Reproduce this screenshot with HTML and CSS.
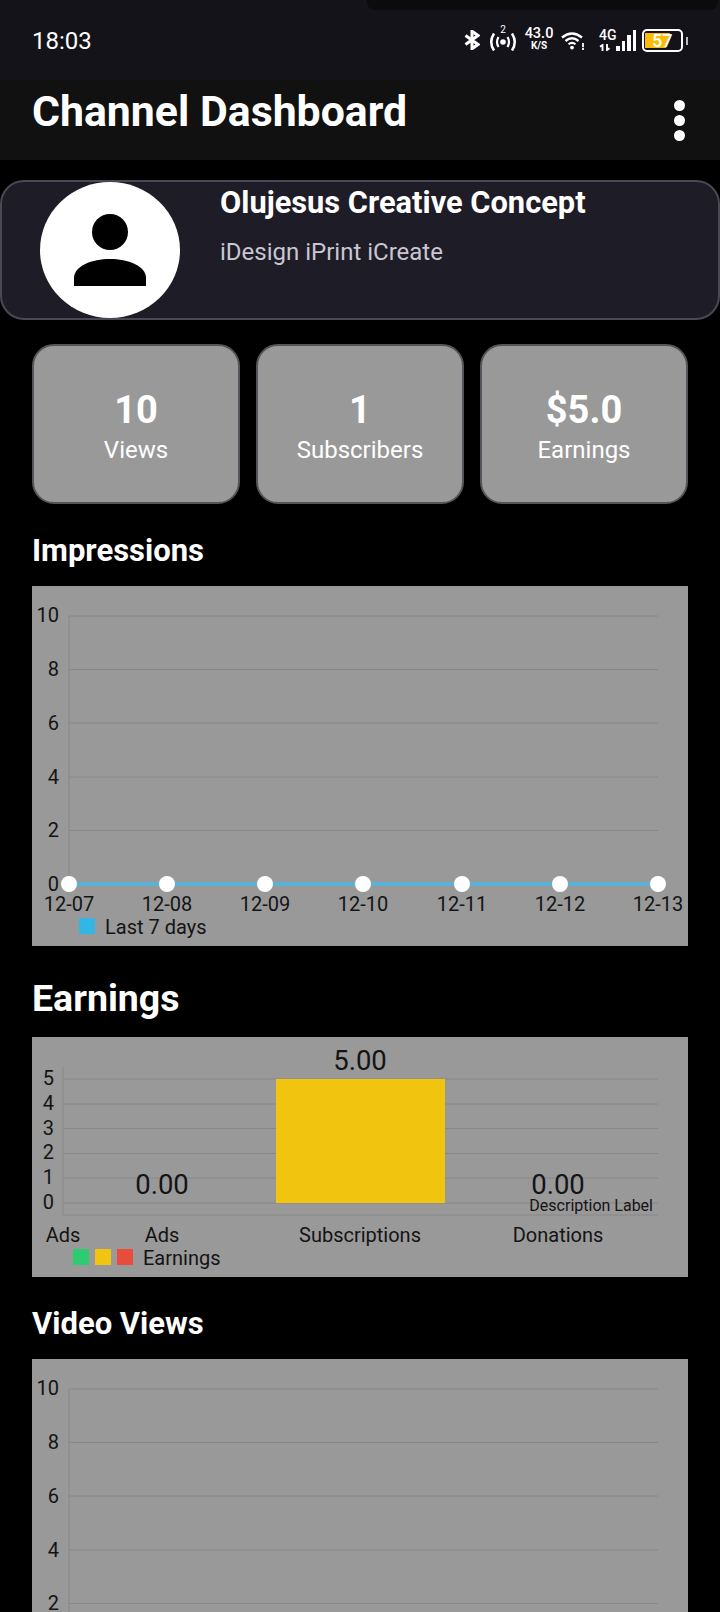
FILE: index.html
```html
<!DOCTYPE html>
<html lang="en">
<head>
    <meta charset="UTF-8">
    <meta name="viewport" content="width=device-width, initial-scale=1.0">
    <title>Channel Dashboard</title>
    <link rel="stylesheet" href="styles.css">
</head>
<body>
    <div class="notch"></div>
    <div class="status-bar">
        <span class="clock">18:03</span>
        <div class="status-icons">
            <svg class="icon-bt" width="16" height="20" viewBox="0 0 16 20">
                <path d="M1.500 5.500 L14 14.500 L8 18.800 V1.200 L14 5.500 L1.500 14.500" fill="none" stroke="#fff" stroke-width="3"/>
            </svg>
            <div class="hotspot">
                <span class="hotspot-num">2</span>
                <svg width="28" height="18" viewBox="0 0 28 18">
                    <circle cx="14" cy="9" r="2.800" fill="#fff"/>
                    <path d="M9.500 4 Q6.500 9 9.500 14 M18.500 4 Q21.500 9 18.500 14" fill="none" stroke="#fff" stroke-width="2.200"/>
                    <path d="M5 0.500 Q-0.500 9 5 17.500 M23 0.500 Q28.500 9 23 17.500" fill="none" stroke="#fff" stroke-width="2.500"/>
                </svg>
            </div>
            <div class="speed"><span class="speed-num">43.0</span><span class="speed-unit">K/S</span></div>
            <svg class="icon-wifi" width="24" height="18" viewBox="0 0 24 18">
                <path d="M1 5.500 Q11 -2.500 21 5.500" fill="none" stroke="#fff" stroke-width="2.300"/>
                <path d="M4.500 9 Q11 3.500 17.500 9" fill="none" stroke="#fff" stroke-width="2.300"/>
                <path d="M7.500 12.300 Q11 9.500 14.500 12.300" fill="none" stroke="#fff" stroke-width="2.100"/>
                <circle cx="11" cy="15.600" r="1.900" fill="#fff"/>
                <path d="M22 11 V15.200 M22 16 V18" stroke="#fff" stroke-width="1.800"/>
            </svg>
            <div class="network">
                <span class="net-type">4G</span>
                <svg width="12" height="7" viewBox="0 0 12 7">
                    <path d="M3.500 7 V1 L1 2.800 M8 0 V6 L10.500 4.200" fill="none" stroke="#fff" stroke-width="1.900"/>
                </svg>
            </div>
            <div class="signal">
                <i class="bar-1"></i><i class="bar-2"></i><i class="bar-3"></i><i class="bar-4"></i>
            </div>
            <div class="battery">
                <div class="battery-body"><div class="battery-fill"></div><span class="battery-num">57</span></div>
                <div class="battery-cap"></div>
            </div>
        </div>
    </div>

    <header class="app-bar">
        <h1>Channel Dashboard</h1>
        <div class="menu-dots"><i></i><i></i><i></i></div>
    </header>

    <section class="channel-card">
        <div class="avatar">
            <svg width="72" height="72" viewBox="0 0 72 72">
                <circle cx="36" cy="18" r="18" fill="#000"/>
                <path d="M0 72 V64 C0 52 18 45 36 45 C54 45 72 52 72 64 V72 Z" fill="#000"/>
            </svg>
        </div>
        <div class="channel-info">
            <h2>Olujesus Creative Concept</h2>
            <p>iDesign iPrint iCreate</p>
        </div>
    </section>

    <div class="stats">
        <div class="stat"><strong>10</strong><span>Views</span></div>
        <div class="stat"><strong>1</strong><span>Subscribers</span></div>
        <div class="stat"><strong>$5.0</strong><span>Earnings</span></div>
    </div>

    <h3 class="section-title">Impressions</h3>
    <div class="chart">
        <svg width="656" height="360" viewBox="0 0 656 360">
            <g class="grid">
                <path d="M37 30 H626 M37 83.500 H626 M37 137 H626 M37 191 H626 M37 244.500 H626 M37 298 H626 M37 30 V298"/>
            </g>
            <g class="y-labels">
                <text x="27" y="36">10</text>
                <text x="27" y="90">8</text>
                <text x="27" y="144">6</text>
                <text x="27" y="198">4</text>
                <text x="27" y="251">2</text>
                <text x="27" y="305">0</text>
            </g>
            <path class="series" d="M37 298 H626"/>
            <g class="dots">
                <circle cx="37" cy="298" r="8"/>
                <circle cx="135" cy="298" r="8"/>
                <circle cx="233" cy="298" r="8"/>
                <circle cx="331" cy="298" r="8"/>
                <circle cx="430" cy="298" r="8"/>
                <circle cx="528" cy="298" r="8"/>
                <circle cx="626" cy="298" r="8"/>
            </g>
            <g class="x-labels">
                <text x="37" y="325">12-07</text>
                <text x="135" y="325">12-08</text>
                <text x="233" y="325">12-09</text>
                <text x="331" y="325">12-10</text>
                <text x="430" y="325">12-11</text>
                <text x="528" y="325">12-12</text>
                <text x="626" y="325">12-13</text>
            </g>
            <rect x="47" y="332" width="16" height="16" fill="#33b5e5"/>
            <text class="legend" x="73" y="348">Last 7 days</text>
        </svg>
    </div>

    <h3 class="section-title title-large">Earnings</h3>
    <div class="chart">
        <svg width="656" height="240" viewBox="0 0 656 240">
            <g class="grid">
                <path d="M31 42 H626 M31 67 H626 M31 91.500 H626 M31 116.500 H626 M31 141 H626 M31 166 H626 M31 178 H626 M31 30 V178"/>
            </g>
            <g class="y-labels">
                <text x="22" y="48">5</text>
                <text x="22" y="73">4</text>
                <text x="22" y="98">3</text>
                <text x="22" y="122">2</text>
                <text x="22" y="147">1</text>
                <text x="22" y="172">0</text>
            </g>
            <rect x="244" y="42" width="169" height="124" fill="#f1c40f"/>
            <g class="bar-values">
                <text x="130" y="157">0.00</text>
                <text x="328" y="33">5.00</text>
                <text x="526" y="157">0.00</text>
            </g>
            <text class="description" x="621" y="174">Description Label</text>
            <g class="x-labels">
                <text x="31" y="205">Ads</text>
                <text x="130" y="205">Ads</text>
                <text x="328" y="205">Subscriptions</text>
                <text x="526" y="205">Donations</text>
            </g>
            <rect x="41" y="212" width="16" height="16" fill="#2ecc71"/>
            <rect x="63" y="212" width="16" height="16" fill="#f1c40f"/>
            <rect x="85" y="212" width="16" height="16" fill="#e74c3c"/>
            <text class="legend" x="111" y="228">Earnings</text>
        </svg>
    </div>

    <h3 class="section-title title-last">Video Views</h3>
    <div class="chart">
        <svg width="656" height="253" viewBox="0 0 656 253">
            <g class="grid">
                <path d="M37 30 H626 M37 83.500 H626 M37 137 H626 M37 191 H626 M37 244.500 H626 M37 30 V253"/>
            </g>
            <g class="y-labels">
                <text x="27" y="36">10</text>
                <text x="27" y="90">8</text>
                <text x="27" y="144">6</text>
                <text x="27" y="198">4</text>
                <text x="27" y="251">2</text>
            </g>
        </svg>
    </div>
</body>
</html>
```

FILE: styles.css
```css
body {
    margin: 0;
    background-color: #000;
    color: #fff;
    font-family: Roboto, "Noto Sans", sans-serif;
    position: relative;
}
.notch {
    position: absolute;
    top: 0;
    left: 367px;
    right: 2px;
    height: 10px;
    background-color: #0b0b0e;
    border-radius: 0 0 8px 8px;
}

/* status bar */
.status-bar {
    height: 80px;
    box-sizing: border-box;
    padding: 0 32px;
    background-color: #14131a;
    display: flex;
    justify-content: space-between;
    align-items: center;
}
.clock {
    font-size: 24px;
    font-weight: 400;
    padding-top: 2px;
}
.status-icons {
    height: 24px;
    display: flex;
    align-items: flex-end;
}
.icon-bt {
    margin-bottom: 2px;
}
.hotspot {
    margin-left: 9px;
    margin-bottom: 1px;
    display: flex;
    flex-direction: column;
    align-items: center;
}
.hotspot-num {
    font-size: 10px;
    line-height: 8px;
    margin-bottom: -1px;
}
.speed {
    margin-left: 8px;
    margin-bottom: 2px;
    width: 28px;
    display: flex;
    flex-direction: column;
    align-items: center;
}
.speed-num {
    font-size: 14.500px;
    font-weight: 500;
    line-height: 14px;
}
.speed-unit {
    font-size: 10px;
    font-weight: 700;
    line-height: 9px;
}
.icon-wifi {
    margin-left: 8px;
    margin-bottom: 2px;
}
.network {
    margin-left: 14px;
    margin-bottom: 1px;
    width: 16px;
    display: flex;
    flex-direction: column;
    align-items: flex-start;
}
.net-type {
    font-size: 14px;
    font-weight: 500;
    line-height: 14px;
    margin-bottom: 2px;
}
.signal {
    margin-left: 1px;
    margin-bottom: 1px;
    display: flex;
    align-items: flex-end;
    gap: 2px;
}
.signal i {
    width: 3.500px;
    background-color: #fff;
}
.bar-1 { height: 5px; }
.bar-2 { height: 10px; }
.bar-3 { height: 16px; }
.bar-4 { height: 21px; }
.battery {
    margin-left: 6px;
    display: flex;
    align-items: center;
    gap: 3px;
}
.battery-body {
    position: relative;
    width: 41px;
    height: 23px;
    box-sizing: border-box;
    border: 2px solid #fff;
    border-radius: 5px;
}
.battery-fill {
    position: absolute;
    top: 2px;
    bottom: 2px;
    left: 1px;
    width: 25px;
    background-color: #fbbc05;
    clip-path: polygon(0 0, 100% 0, 84% 100%, 0 100%);
}
.battery-num {
    position: absolute;
    top: 0;
    left: 8px;
    line-height: 19px;
    font-size: 18px;
    font-weight: 500;
}
.battery-cap {
    width: 2px;
    height: 8px;
    background-color: #bbb;
}

/* app bar */
.app-bar {
    height: 80px;
    box-sizing: border-box;
    padding: 0 32px;
    background-color: #111;
    display: flex;
    justify-content: space-between;
    align-items: center;
}
.app-bar h1 {
    margin: 0 0 18px;
    font-size: 42.800px;
    line-height: 50px;
    font-weight: 700;
}
.menu-dots {
    display: flex;
    flex-direction: column;
    gap: 4px;
    padding-right: 3px;
}
.menu-dots i {
    width: 11px;
    height: 11px;
    border-radius: 50%;
    background-color: #fff;
}

/* channel card */
.channel-card {
    margin-top: 20px;
    height: 140px;
    box-sizing: border-box;
    border: 2px solid #4a4953;
    border-radius: 24px;
    background-color: #1e1c26;
    padding: 0 0 0 38px;
    display: flex;
    gap: 40px;
}
.avatar {
    width: 140px;
    height: 136px;
    border-radius: 50%;
    background-color: #fff;
    display: flex;
    align-items: center;
    justify-content: center;
}
.channel-info h2 {
    margin: 1px 0 0;
    font-size: 30.800px;
    font-weight: 700;
    line-height: 40px;
}
.channel-info p {
    margin: 15px 0 0;
    font-size: 24px;
    color: #c9c7d2;
}

/* stat boxes */
.stats {
    margin: 24px 32px 0;
    display: flex;
    gap: 16px;
}
.stat {
    flex: 1;
    height: 160px;
    box-sizing: border-box;
    border: 2px solid #55545a;
    border-radius: 22px;
    padding-top: 8px;
    background-color: #999;
    display: flex;
    flex-direction: column;
    align-items: center;
    justify-content: center;
}
.stat strong {
    font-size: 38px;
    line-height: 44px;
}
.stat span {
    font-size: 24px;
    line-height: 36px;
}

/* charts */
.section-title {
    margin: 29px 32px 17px;
    font-size: 31px;
    font-weight: 700;
    line-height: 36px;
}
.title-large {
    margin: 30px 32px 17px;
    font-size: 37.500px;
    line-height: 44px;
}
.title-last {
    margin: 29px 32px 17px;
}
.chart {
    margin: 0 32px;
    background-color: #999;
}
.chart svg {
    display: block;
}
.chart text {
    font-family: Roboto, sans-serif;
    font-size: 20px;
    fill: #141414;
}
.grid path {
    fill: none;
    stroke: #888;
    stroke-width: 1;
}
.y-labels text {
    text-anchor: end;
}
.x-labels text {
    text-anchor: middle;
}
.series {
    stroke: #5ab3d6;
    stroke-width: 4;
    fill: none;
}
.dots circle {
    fill: #fff;
}
.chart .bar-values text {
    font-size: 27.500px;
    text-anchor: middle;
}
.chart .description {
    font-size: 16px;
    text-anchor: end;
}
```
